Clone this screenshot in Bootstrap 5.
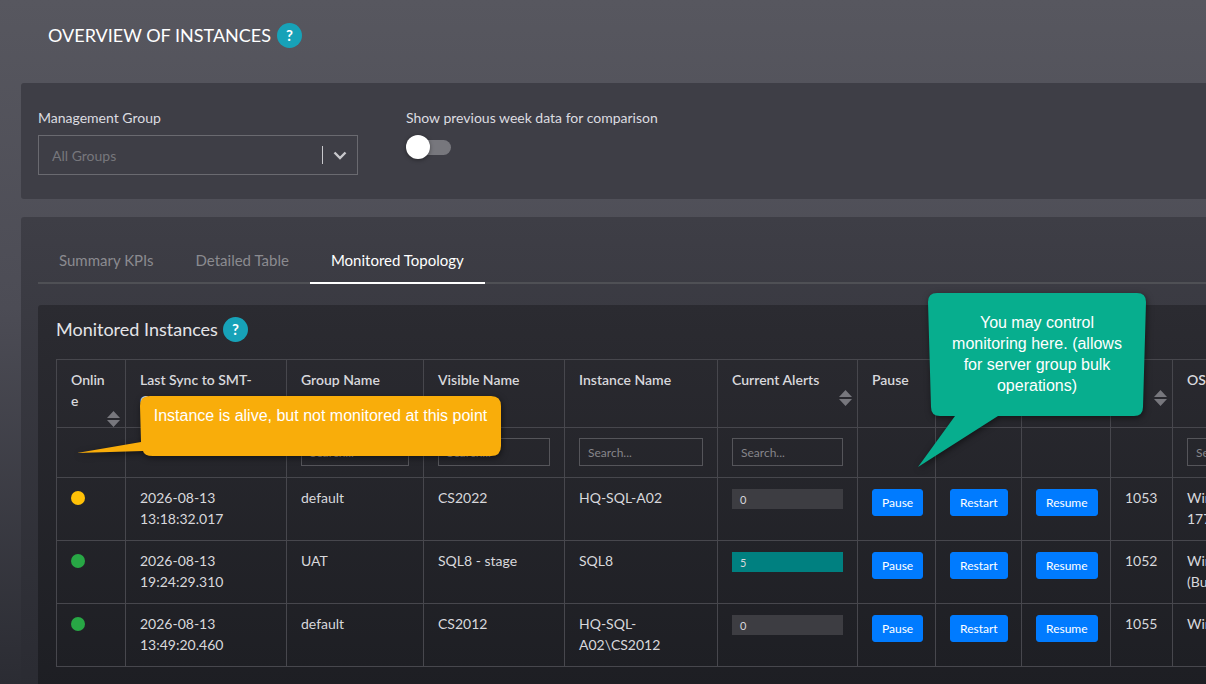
<!DOCTYPE html>
<html lang="en">
<head>
  <meta charset="utf-8" />
  <meta name="viewport" content="width=device-width, initial-scale=1" />
  <title>Overview of Instances</title>
  <link href="https://cdn.jsdelivr.net/npm/bootstrap@5.3.2/dist/css/bootstrap.min.css" rel="stylesheet" />
  <style>
    html, body { height: 684px; overflow: hidden; }
    body {
      font-family: "Lato", "Noto Sans", sans-serif;
      font-size: 14px;
      color: #d8d8dc;
      background: linear-gradient(180deg, #57575f 0%, #4c4c55 45%, #2b2c33 100%);
    }
    .page-wrap { width: 1420px; height: 684px; padding-left: 21px; position: relative; }
    .page-head { height: 83px; padding: 23px 0 0 27px; }
    .page-title { font-size: 18px; line-height: 25px; font-weight: 400; color: #fff; margin: 0 6px 0 0; }
    .help-dot {
      width: 25px; height: 25px; border-radius: 50%;
      background: #17a2b8; color: #fff; font-weight: 700; font-size: 15px; line-height: 25px; text-align: center;
    }
    .dark-card { background: #3e3e46; border: 0; border-radius: 3px; color: inherit; }
    .filter-card { height: 116px; padding: 25px 17px; margin-bottom: 18px; }
    .field-label { font-size: 14px; line-height: 19px; margin-bottom: 8px; color: #dcdce0; }
    .group-select {
      width: 320px; height: 40px; border: 1px solid #6a6a70; padding: 0 10px 0 13px;
      color: #77777c; font-size: 14px;
    }
    .select-sep { width: 1px; height: 18px; background: #c8c8cc; margin-right: 10px; }
    .toggle-track { display: block; position: relative; width: 45px; height: 24px; margin-top: 6px; }
    .toggle-track::before {
      content: ""; position: absolute; left: 10px; right: 0; top: 5px; height: 15px;
      border-radius: 8px; background: #77777d;
    }
    .toggle-track::after {
      content: ""; position: absolute; left: 0; top: 0; width: 24px; height: 24px; border-radius: 50%;
      background: #fff; box-shadow: 0 1px 4px rgba(0,0,0,.4);
    }
    .main-card { height: 480px; padding: 19px 17px 0; background: linear-gradient(180deg, #3e3e46 0%, #2a2b32 100%); }
    .tab-row { border-bottom: 2px solid #4f5055; height: 48px; margin-bottom: 21px; }
    .tab-row .nav-link {
      border: 0; border-radius: 0; background: none; color: #8b8b90; font-size: 15px;
      height: 48px; padding: 13px 21px 0; margin: 0;
    }
    .tab-row .nav-link.active { color: #fff; background: none; border-bottom: 2px solid #fff; }
    .inner-panel {
      height: 400px; padding: 12px 18px; border-radius: 3px;
      background: linear-gradient(180deg, #2b2b31 0%, #1d1e23 100%);
    }
    .panel-title { font-size: 18px; line-height: 25px; font-weight: 400; color: #e4e4e8; margin: 0 5px 0 0; }
    .panel-head { margin-bottom: 17px; }
    .grid-table { width: 1360px; table-layout: fixed; margin: 0; border-collapse: collapse; --bs-table-bg: transparent; --bs-table-color: #d8d8dc; }
    .grid-table th, .grid-table td { border: 1px solid #47474d; padding: 9px 14px; font-size: 14px; line-height: 21px; vertical-align: top; }
    .grid-table th { font-weight: 600; height: 62px; padding-bottom: 0; color: #d8d8dc; }
    .grid-table .filter-row td { height: 50px; padding-top: 10px; padding-bottom: 0; }
    .grid-table .data-row td { height: 63px; }
    .c-online { width: 69px; } .c-sync { width: 161px; } .c-group { width: 137px; } .c-visible { width: 141px; }
    .c-inst { width: 153px; } .c-alerts { width: 140px; } .c-pause { width: 78px; } .c-restart { width: 86px; }
    .c-resume { width: 89px; } .c-id { width: 62px; } .c-os { width: 244px; }
    .sort-mark { display: flex; justify-content: flex-end; margin-right: -9px; }
    .search-box {
      height: 28px; border: 1px solid #55555a; border-radius: 0; background: transparent; color: #d8d8dc;
      font-size: 12px; padding: 0 8px;
    }
    .search-box::placeholder { color: #85858a; }
    .search-box:focus { background: transparent; color: #d8d8dc; }
    .status-dot { display: block; width: 14px; height: 14px; border-radius: 50%; margin-top: 4px; }
    .dot-amber { background: #ffc107; }
    .dot-green { background: #28a745; }
    .alert-meter { height: 20px; background: #3d3d42; border-radius: 0; font-size: 11px; margin-top: 2px; }
    .alert-meter .progress-bar { background: transparent; color: #d8d8dc; text-align: left; padding-left: 8px; display: block; line-height: 22px; }
    .alert-meter .meter-hot { background: #008080; }
    .act-btn { font-size: 12px; line-height: 17px; padding: 4px 9px 5px; border-radius: 3px; background: #007bff; border-color: #007bff; height: 27px; margin-top: 2px; }
    .callout { position: absolute; color: #fff; font-family: "Liberation Sans", Arial, sans-serif; font-size: 16px; line-height: 21px; text-align: center; }
    .callout svg { position: absolute; overflow: visible; left: 0; top: 0; filter: drop-shadow(1px 2px 3px rgba(0,0,0,.5)); }
    .callout span { position: relative; display: block; }
    .callout-amber { left: 140px; top: 396px; width: 361px; height: 60px; padding: 9px 12px; }
    .callout-teal { left: 928px; top: 293px; width: 218px; height: 123px; padding: 19px 8px; }
  </style>
</head>
<body>
  <div class="page-wrap">
    <div class="page-head d-flex align-items-start">
      <h1 class="page-title">OVERVIEW OF INSTANCES</h1>
      <div class="help-dot">?</div>
    </div>

    <!-- filtros -->
    <div class="card dark-card filter-card">
      <div class="d-flex">
        <div class="filter-col">
          <div class="field-label">Management Group</div>
          <div class="group-select d-flex align-items-center">
            <span class="flex-grow-1">All Groups</span>
            <span class="select-sep"></span>
            <svg width="14" height="9" viewBox="0 0 14 9"><path d="M1.5 1.5 7 7l5.5-5.5" fill="none" stroke="#c8c8cc" stroke-width="2.4"/></svg>
          </div>
        </div>
        <div class="ms-5 ps-0 toggle-col">
          <div class="field-label">Show previous week data for comparison</div>
          <span class="toggle-track"></span>
        </div>
      </div>
    </div>

    <div class="card dark-card main-card">
      <ul class="nav nav-tabs tab-row">
        <li class="nav-item"><a class="nav-link" href="#">Summary KPIs</a></li>
        <li class="nav-item"><a class="nav-link" href="#">Detailed Table</a></li>
        <li class="nav-item"><a class="nav-link active" href="#">Monitored Topology</a></li>
      </ul>

      <div class="inner-panel">
        <div class="panel-head d-flex align-items-start">
          <h2 class="panel-title">Monitored Instances</h2>
          <div class="help-dot">?</div>
        </div>

        <table class="table grid-table">
          <colgroup>
            <col class="c-online"><col class="c-sync"><col class="c-group"><col class="c-visible"><col class="c-inst">
            <col class="c-alerts"><col class="c-pause"><col class="c-restart"><col class="c-resume"><col class="c-id"><col class="c-os">
          </colgroup>
          <thead>
            <tr>
              <th>Online<div class="sort-mark"><svg width="13" height="16" viewBox="0 0 13 16"><path d="M6.5 0 13 7H0zM0 9h13l-6.500 7z" fill="#77777d"/></svg></div></th>
              <th>Last Sync to SMT-Core<div class="sort-mark"><svg width="13" height="16" viewBox="0 0 13 16"><path d="M6.500 0 13 7H0zM0 9h13l-6.500 7z" fill="#77777d"/></svg></div></th>
              <th>Group Name</th>
              <th>Visible Name</th>
              <th>Instance Name</th>
              <th>Current Alerts<div class="sort-mark"><svg width="13" height="16" viewBox="0 0 13 16"><path d="M6.500 0 13 7H0zM0 9h13l-6.500 7z" fill="#77777d"/></svg></div></th>
              <th>Pause</th>
              <th>Restart</th>
              <th>Resume</th>
              <th>ID<div class="sort-mark"><svg width="13" height="16" viewBox="0 0 13 16"><path d="M6.500 0 13 7H0zM0 9h13l-6.500 7z" fill="#77777d"/></svg></div></th>
              <th>OS Version</th>
            </tr>
            <tr class="filter-row">
              <td></td>
              <td></td>
              <td><input class="form-control search-box" placeholder="Search..."></td>
              <td><input class="form-control search-box" placeholder="Search..."></td>
              <td><input class="form-control search-box" placeholder="Search..."></td>
              <td><input class="form-control search-box" placeholder="Search..."></td>
              <td></td>
              <td></td>
              <td></td>
              <td></td>
              <td><input class="form-control search-box" placeholder="Search..."></td>
            </tr>
          </thead>
          <tbody>
            <tr class="data-row">
              <td><span class="status-dot dot-amber"></span></td>
              <td>2026-08-13 13:18:32.017</td>
              <td>default</td>
              <td>CS2022</td>
              <td>HQ-SQL-A02</td>
              <td><div class="progress alert-meter"><div class="progress-bar w-100">0</div></div></td>
              <td><button class="btn btn-primary act-btn">Pause</button></td>
              <td><button class="btn btn-primary act-btn">Restart</button></td>
              <td><button class="btn btn-primary act-btn">Resume</button></td>
              <td>1053</td>
              <td>Windows Server 2022<br>17763</td>
            </tr>
            <tr class="data-row">
              <td><span class="status-dot dot-green"></span></td>
              <td>2026-08-13 19:24:29.310</td>
              <td>UAT</td>
              <td>SQL8 - stage</td>
              <td>SQL8</td>
              <td><div class="progress alert-meter"><div class="progress-bar meter-hot w-100">5</div></div></td>
              <td><button class="btn btn-primary act-btn">Pause</button></td>
              <td><button class="btn btn-primary act-btn">Restart</button></td>
              <td><button class="btn btn-primary act-btn">Resume</button></td>
              <td>1052</td>
              <td>Windows Server 2019<br>(Build 17763)</td>
            </tr>
            <tr class="data-row">
              <td><span class="status-dot dot-green"></span></td>
              <td>2026-08-13 13:49:20.460</td>
              <td>default</td>
              <td>CS2012</td>
              <td>HQ-SQL-A02\CS2012</td>
              <td><div class="progress alert-meter"><div class="progress-bar w-100">0</div></div></td>
              <td><button class="btn btn-primary act-btn">Pause</button></td>
              <td><button class="btn btn-primary act-btn">Restart</button></td>
              <td><button class="btn btn-primary act-btn">Resume</button></td>
              <td>1055</td>
              <td>Windows Server 2012</td>
            </tr>
          </tbody>
        </table>
      </div>
    </div>

    <!-- globos de ayuda -->
    <div class="callout callout-amber">
      <svg width="361" height="60" viewBox="0 0 361 60"><path d="M10 0H351Q361 0 361 10V50Q361 60 351 60H13Q4 60 3 55L-63 57 1 46 0 10Q0 0 10 0Z" fill="#f9ad0a"/></svg>
      <span>Instance is alive, but not monitored at this point</span>
    </div>
    <div class="callout callout-teal">
      <svg width="218" height="123" viewBox="0 0 218 123"><path d="M9 0H209Q218 0 218 9L215 114Q215 123 206 123H70L-10 174 27 123H12Q3 123 3 114L0 9Q0 0 9 0Z" fill="#07ae8e"/></svg>
      <span>You may control<br>monitoring here. (allows<br>for server group bulk<br>operations)</span>
    </div>
  </div>

  <script src="https://cdn.jsdelivr.net/npm/bootstrap@5.3.2/dist/js/bootstrap.bundle.min.js"></script>
</body>
</html>
